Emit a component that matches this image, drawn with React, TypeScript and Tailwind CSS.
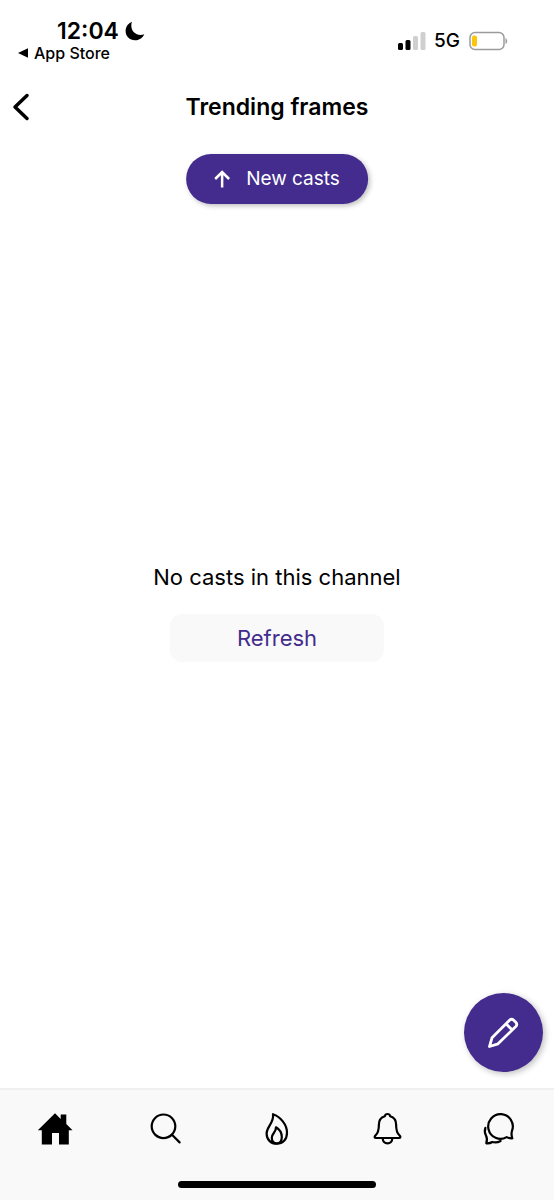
import React from 'react';

interface IconProps {
  children: React.ReactNode;
}

const TabIcon: React.FC<IconProps> = ({ children }) => (
  <svg
    viewBox="0 0 36 36"
    className="w-9 h-9"
    fill="none"
    stroke="currentColor"
    strokeWidth="2.2"
    strokeLinecap="round"
    strokeLinejoin="round"
    aria-hidden="true"
  >
    {children}
  </svg>
);

const tabs = [
  {
    label: 'Home',
    icon: (
      <path
        d="M18 2.3 23.7 8V3.5h5.6v9.6l6.2 6.2h-3.7v14.2H22V22h-7v11.5H4.8V19.3H.8z"
        fill="currentColor"
        stroke="none"
      />
    ),
  },
  {
    label: 'Search',
    icon: (
      <>
        <circle cx="15.5" cy="15.3" r="11.8" />
        <path d="m24 23.8 7.6 7.6" />
      </>
    ),
  },
  {
    label: 'Trending',
    icon: (
      <>
        <path d="M14 3.2c7.5 2.5 14 10.3 14 18.5 0 6.8-4.2 11-10.2 11S7.6 28.5 7.6 22.5C7.6 15 15.2 12.5 14 3.2z" />
        <path d="M17 16.3c3.5 2 5.8 6 5.8 9.8 0 4-1.9 6.4-5 6.4s-5-2.4-5-5.9c0-4 4.5-5.6 4.2-10.3z" />
      </>
    ),
  },
  {
    label: 'Notifications',
    icon: (
      <>
        <path d="M17.5 3c-1.5 0-2.4.8-2.7 2.2C11 6.4 8.9 9.2 8.9 13.5c0 5.5-.6 8.6-3.4 10.8-1.5 1.2-1 2.7.6 2.7h22.8c1.6 0 2.1-1.5.6-2.7-2.8-2.2-3.4-5.3-3.4-10.8 0-4.3-2.1-7.1-5.9-8.3C19.9 3.8 19 3 17.5 3z" />
        <path d="M12.7 27.2c0 3 2 5.2 4.8 5.2s4.8-2.2 4.8-5.2" />
      </>
    ),
  },
  {
    label: 'Messages',
    icon: (
      <>
        <path d="M31.3 27.3c-2.5.1-4.3-.3-5.7-1.2A12.3 12.3 0 1 1 31 19.8c-.7 2.5-.6 5 .3 7.5z" />
        <path d="M4.4 16.8c-.9 2.7-.7 5.4.6 7.8 1.2 2.5 1.3 5 .3 7.7 2.5.2 4.2-.1 6-1.3 2.8.8 5.8.4 8.3-1" />
      </>
    ),
  },
];

const StatusBar: React.FC = () => (
  <div className="flex items-start justify-between pt-[18px] pl-[18px] pr-[46px]">
    <div>
      <div className="flex items-center gap-[6px] pl-[39px] h-[26px]">
        <span className="text-[23px] leading-[26px] font-semibold">12:04</span>
        <svg viewBox="0 0 20 20" className="w-5 h-5" fill="currentColor" aria-hidden="true">
          <path d="M7 .8C3.3 2.3.6 5.8.6 10c0 5.2 4.1 9.3 9.3 9.3 4.2 0 7.9-2.5 9.4-6.1-1.3.5-2.4.7-3.6.7-5.5 0-9.4-3.9-9.4-9.4 0-1.3.2-2.5.7-3.7z" />
        </svg>
      </div>
      <a href="#" className="flex items-center gap-[6px] text-base leading-[18px] font-medium">
        <svg viewBox="0 0 10 10" className="w-[10px] h-[10px]" fill="currentColor" aria-hidden="true">
          <path d="M0 5 10 .2v9.6z" />
        </svg>
        App Store
      </a>
    </div>

    <div className="flex items-center gap-2 pt-[13px]">
      <svg viewBox="0 0 28 18" className="w-7 h-[18px]" aria-hidden="true">
        <rect x="0" y="11" width="5" height="7" rx="1.5" />
        <rect x="7.5" y="8" width="5" height="10" rx="1.5" />
        <rect x="15" y="4" width="5" height="14" rx="1.5" fill="#cfcfcf" />
        <rect x="22.5" y="0" width="5" height="18" rx="1.5" fill="#cfcfcf" />
      </svg>
      <span className="text-[19px] leading-5 font-medium">5G</span>
      <svg viewBox="0 0 40 20" className="w-10 h-5" aria-hidden="true">
        <rect x="2" y="1.5" width="34" height="17" rx="5" fill="none" stroke="#9b9b9b" strokeWidth="1.5" />
        <rect x="4" y="4.5" width="5" height="11" rx="2" fill="#fdc60a" />
        <path d="M37.5 7c2 .8 2.5 5.2 0 6z" fill="#9b9b9b" />
      </svg>
    </div>
  </div>
);

const App: React.FC = () => {
  return (
    <div className="min-h-screen flex flex-col bg-white text-black font-['Inter',sans-serif]">
      <StatusBar />

      <header className="grid grid-cols-[1fr_auto_1fr] items-center pt-[30px] px-3 pb-[10px]">
        <button type="button" aria-label="Back" className="justify-self-start">
          <svg
            viewBox="0 0 18 30"
            className="w-[18px] h-[30px]"
            fill="none"
            stroke="currentColor"
            strokeWidth="3.5"
            strokeLinecap="round"
            strokeLinejoin="round"
            aria-hidden="true"
          >
            <path d="M15 3.5 3 15l12 11.5" />
          </svg>
        </button>
        <h1 className="text-[23px] leading-[30px] font-semibold">Trending frames</h1>
      </header>

      <main className="relative flex-1 flex flex-col items-center justify-center pt-1">
        {/* Floats over the feed */}
        <button
          type="button"
          className="absolute top-[22px] left-1/2 -translate-x-1/2 flex items-center gap-4 h-[50px] px-7 rounded-full bg-[#432c8d] text-white text-[19px] whitespace-nowrap shadow-[2px_2px_5px_rgba(0,0,0,0.25)]"
        >
          <svg
            viewBox="0 0 16 18"
            className="w-4 h-[18px]"
            fill="none"
            stroke="currentColor"
            strokeWidth="2.5"
            aria-hidden="true"
          >
            <path d="M8 17.5V2M1 9l7-7 7 7" />
          </svg>
          New casts
        </button>

        <p className="text-[22px] leading-[30px]">No casts in this channel</p>
        <button
          type="button"
          className="mt-[22px] w-[214px] h-12 rounded-xl bg-[#f9f9f9] text-[#432c8d] text-[22px]"
        >
          Refresh
        </button>

        <button
          type="button"
          aria-label="New cast"
          className="absolute bottom-4 right-[11px] flex items-center justify-center w-[79px] h-[79px] rounded-full bg-[#432c8d] text-white shadow-[2px_2px_6px_rgba(0,0,0,0.25)]"
        >
          <svg
            viewBox="0 0 32 32"
            className="w-8 h-8"
            fill="none"
            stroke="currentColor"
            strokeWidth="2.8"
            strokeLinecap="round"
            strokeLinejoin="round"
            aria-hidden="true"
          >
            <path d="M1.5 29.5l2.5-8.7L21.5 3.2c1.3-1.2 2.9-1.2 4.2 0l2.1 2.1c1.2 1.3 1.2 2.9 0 4.2L10 26.8zM18 6.8l6 6" />
          </svg>
        </button>
      </main>

      <nav className="border-t-2 border-[#efefef] bg-[#f9f9f9] pt-[21px] pb-3">
        <ul className="grid grid-cols-5">
          {tabs.map((tab) => (
            <li key={tab.label} className="flex justify-center">
              <button type="button" aria-label={tab.label}>
                <TabIcon>{tab.icon}</TabIcon>
              </button>
            </li>
          ))}
        </ul>
        <div className="mx-auto mt-[34px] w-[198px] h-[7px] rounded-full bg-black" />
      </nav>
    </div>
  );
};

export default App;
